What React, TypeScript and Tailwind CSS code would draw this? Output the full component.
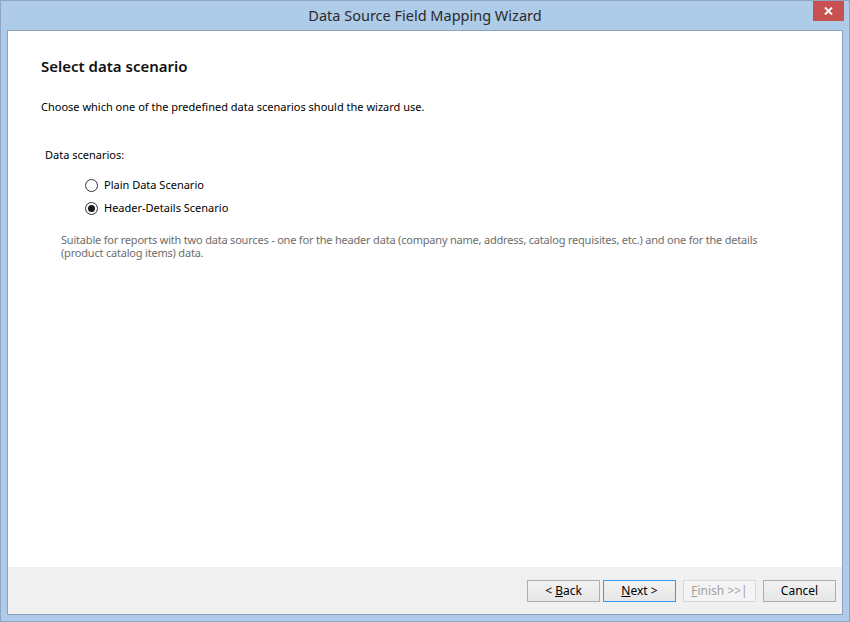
import React, { useState } from "react"

const font = { fontFamily: '"Segoe UI", "Noto Sans", "Open Sans", sans-serif' }

function Radio({
  checked,
  label,
  onSelect,
}: {
  checked: boolean
  label: string
  onSelect: () => void
}) {
  return (
    <div className="flex h-[23px] items-center" onClick={onSelect}>
      <span className="flex h-[13px] w-[13px] items-center justify-center rounded-full border border-[#333333] bg-white">
        {checked && <span className="h-[7px] w-[7px] rounded-full bg-[#1a1a1a]" />}
      </span>
      <span className="ml-[6px] text-[11px] text-black">{label}</span>
    </div>
  )
}

function WizButton({
  children,
  primary,
  disabled,
}: {
  children: React.ReactNode
  primary?: boolean
  disabled?: boolean
}) {
  return (
    <button
      type="button"
      disabled={disabled}
      className={
        "h-[22px] w-[73px] border text-[12px] leading-none " +
        (disabled
          ? "border-[#d9d9d9] bg-[#f4f4f4] text-[#a0a0a0]"
          : primary
            ? "border-[#3399ff] bg-gradient-to-b from-[#f2f2f2] to-[#e6e6e6] text-black"
            : "border-[#adadad] bg-gradient-to-b from-[#f2f2f2] to-[#e6e6e6] text-black")
      }
    >
      {children}
    </button>
  )
}

export default function App() {
  const [scenario, setScenario] = useState("header")

  return (
    <div
      style={font}
      className="flex h-[622px] w-[850px] flex-col border border-[#8ea6c4] bg-[#aecbe8]"
    >
      <div className="relative flex h-[29px] shrink-0 items-center justify-center">
        <span className="text-[14.5px] text-[#2a2a2a]">Data Source Field Mapping Wizard</span>
        <div className="absolute right-[5px] top-0 flex h-[20px] w-[31px] items-center justify-center bg-[#c75050]">
          <svg width="9" height="8" viewBox="0 0 9 8">
            <path d="M1 0.5 L8 7.5 M8 0.5 L1 7.5" stroke="white" strokeWidth="2" />
          </svg>
        </div>
      </div>

      <div className="mx-[6px] mb-[6px] flex flex-1 flex-col border border-[#8aa2c0] bg-white">
        <div className="flex-1 pl-[33px] pt-[24px]">
          <h1 className="text-[15px] font-semibold text-[#111111]">Select data scenario</h1>
          <p className="mt-[21px] text-[11px] text-black">
            Choose which one of the predefined data scenarios should the wizard use.
          </p>

          <div className="ml-[4px] mt-[32px] text-[11px] text-black">Data scenarios:</div>
          <div className="ml-[44px] mt-[10px] flex flex-col">
            <Radio
              checked={scenario === "plain"}
              label="Plain Data Scenario"
              onSelect={() => setScenario("plain")}
            />
            <Radio
              checked={scenario === "header"}
              label="Header-Details Scenario"
              onSelect={() => setScenario("header")}
            />
          </div>
          <p className="ml-[20px] mr-[50px] mt-[13px] text-[11px] leading-[13px] tracking-[-0.2px] text-[#6d6d6d]">
            Suitable for reports with two data sources - one for the header data (company name,
            address, catalog requisites, etc.) and one for the details (product catalog items) data.
          </p>
        </div>

        <div className="flex h-[47px] shrink-0 items-start justify-end bg-[#f0f0f0] pr-[6px] pt-[13px]">
          <WizButton>
            &lt; <u>B</u>ack
          </WizButton>
          <div className="w-[3px]" />
          <WizButton primary>
            <u>N</u>ext &gt;
          </WizButton>
          <div className="w-[7px]" />
          <WizButton disabled>
            <u>F</u>inish &gt;&gt;|
          </WizButton>
          <div className="w-[7px]" />
          <WizButton>Cancel</WizButton>
        </div>
      </div>
    </div>
  )
}
